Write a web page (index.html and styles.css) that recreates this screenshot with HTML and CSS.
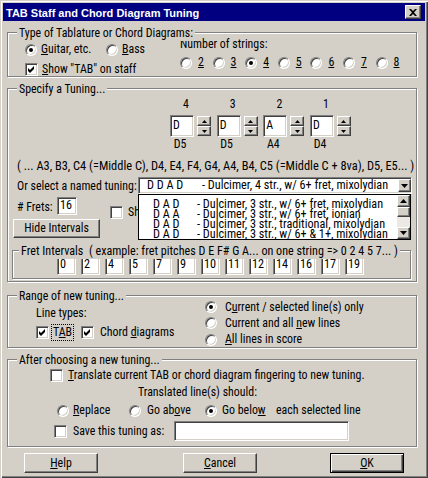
FILE: index.html
```html
<!DOCTYPE html>
<html>
<head>
<meta charset="utf-8">
<title>TAB Staff and Chord Diagram Tuning</title>
<link rel="stylesheet" href="styles.css">
</head>
<body>
<div class="window">
  <div class="titlebar">
    <span class="title">TAB Staff and Chord Diagram Tuning</span>
    <span class="closebtn"><svg width="8" height="7" viewBox="0 0 8 7"><path d="M0 0h2l2 2 2-2h2L5 3.5 8 7H6L4 5 2 7H0l3-3.5z"/></svg></span>
  </div>

  <div class="group g1">
    <span class="legend">Type of Tablature or Chord Diagrams:</span>
    <div class="g1-left">
      <div class="row r-guitar">
        <span class="opt opt-guitar"><span class="radio on"></span><span class="lbl"><u>G</u>uitar, etc.</span></span>
        <span class="opt"><span class="radio"></span><span class="lbl"><u>B</u>ass</span></span>
      </div>
      <div class="row r-show">
        <span class="check"><svg width="13" height="13" viewBox="0 0 13 13"><path d="M3 5v3l2 2 4-4V3L5 7z"/></svg></span><span class="lbl"><u>S</u>how "TAB" on staff</span>
      </div>
    </div>
    <div class="g1-right">
      <div class="nstr">Number of strings:</div>
      <div class="row strings">
        <span class="sopt"><span class="radio"></span><span class="lbl"><u>2</u></span></span>
        <span class="sopt"><span class="radio"></span><span class="lbl"><u>3</u></span></span>
        <span class="sopt"><span class="radio on"></span><span class="lbl"><u>4</u></span></span>
        <span class="sopt"><span class="radio"></span><span class="lbl"><u>5</u></span></span>
        <span class="sopt"><span class="radio"></span><span class="lbl"><u>6</u></span></span>
        <span class="sopt"><span class="radio"></span><span class="lbl"><u>7</u></span></span>
        <span class="sopt"><span class="radio"></span><span class="lbl"><u>8</u></span></span>
      </div>
    </div>
  </div>

  <div class="group g2">
    <span class="legend">Specify a Tuning...</span>
    <div class="cols nums">
      <span class="col"><span class="num">4</span></span>
      <span class="col"><span class="num">3</span></span>
      <span class="col"><span class="num">2</span></span>
      <span class="col"><span class="num">1</span></span>
    </div>
    <div class="cols spins">
      <span class="col"><span class="field note">D</span><span class="spin"><span class="btn sb"><svg width="5" height="3" viewBox="0 0 5 3"><path d="M0 3h5L2.5 0z"/></svg></span><span class="btn sb"><svg width="5" height="3" viewBox="0 0 5 3"><path d="M0 0h5L2.5 3z"/></svg></span></span></span>
      <span class="col"><span class="field note">D</span><span class="spin"><span class="btn sb"><svg width="5" height="3" viewBox="0 0 5 3"><path d="M0 3h5L2.5 0z"/></svg></span><span class="btn sb"><svg width="5" height="3" viewBox="0 0 5 3"><path d="M0 0h5L2.5 3z"/></svg></span></span></span>
      <span class="col"><span class="field note">A</span><span class="spin"><span class="btn sb"><svg width="5" height="3" viewBox="0 0 5 3"><path d="M0 3h5L2.5 0z"/></svg></span><span class="btn sb"><svg width="5" height="3" viewBox="0 0 5 3"><path d="M0 0h5L2.5 3z"/></svg></span></span></span>
      <span class="col"><span class="field note">D</span><span class="spin"><span class="btn sb"><svg width="5" height="3" viewBox="0 0 5 3"><path d="M0 3h5L2.5 0z"/></svg></span><span class="btn sb"><svg width="5" height="3" viewBox="0 0 5 3"><path d="M0 0h5L2.5 3z"/></svg></span></span></span>
    </div>
    <div class="cols pitches">
      <span class="col"><span class="pitch">D5</span></span>
      <span class="col"><span class="pitch">D5</span></span>
      <span class="col"><span class="pitch">A4</span></span>
      <span class="col"><span class="pitch">D4</span></span>
    </div>
    <div class="range">( ... A3, B3, C4 (=Middle C), D4, E4, F4, G4, A4, B4, C5 (=Middle C + 8va), D5, E5... )</div>
    <div class="named">
      <span class="named-label">Or select a named tuning:</span>
      <div class="combo">
        <div class="field combo-field">
          <span class="cp">D D A D</span><span class="cd">- Dulcimer, 4 str., w/ 6+ fret, mixolydian</span>
          <span class="btn ddbtn"><svg width="7" height="4" viewBox="0 0 7 4"><path d="M0 0h7L3.5 4z"/></svg></span>
        </div>
        <div class="droplist">
          <div class="items">
            <div class="item"><span class="ip">D A D</span><span>- Dulcimer, 3 str., w/ 6+ fret, mixolydian</span></div>
            <div class="item"><span class="ip">D A A</span><span>- Dulcimer, 3 str., w/ 6+ fret, ionian</span></div>
            <div class="item"><span class="ip">D A D</span><span>- Dulcimer, 3 str., traditional, mixolydian</span></div>
            <div class="item"><span class="ip">D A D</span><span>- Dulcimer, 3 str., w/ 6+ &amp; 1+, mixolydian</span></div>
          </div>
          <div class="sbar">
            <span class="btn sbtn"><svg width="7" height="4" viewBox="0 0 7 4"><path d="M0 4h7L3.5 0z"/></svg></span>
            <span class="btn thumb"></span>
            <span class="track"></span>
            <span class="btn sbtn"><svg width="7" height="4" viewBox="0 0 7 4"><path d="M0 0h7L3.5 4z"/></svg></span>
          </div>
        </div>
      </div>
    </div>
    <div class="frets">
      <span class="frets-label"># Frets:</span>
      <span class="field fbox">16</span>
      <span class="check sh"></span>
      <span class="sh-lbl">Show intervals</span>
    </div>
    <div class="btn hide-btn">Hide Intervals</div>
    <div class="group fretgroup">
      <span class="legend">Fret Intervals&nbsp; ( example: fret pitches D E F# G A... on one string =&gt; 0 2 4 5 7... )</span>
      <div class="boxes">
        <span class="field ibox">0</span>
        <span class="field ibox">2</span>
        <span class="field ibox">4</span>
        <span class="field ibox">5</span>
        <span class="field ibox">7</span>
        <span class="field ibox">9</span>
        <span class="field ibox">10</span>
        <span class="field ibox">11</span>
        <span class="field ibox">12</span>
        <span class="field ibox">14</span>
        <span class="field ibox">16</span>
        <span class="field ibox">17</span>
        <span class="field ibox">19</span>
      </div>
    </div>
  </div>

  <div class="group g3">
    <span class="legend">Range of new tuning...</span>
    <div class="g3-left">
      <div class="linetypes">Line types:</div>
      <div class="row ltrow">
        <span class="check"><svg width="13" height="13" viewBox="0 0 13 13"><path d="M3 5v3l2 2 4-4V3L5 7z"/></svg></span><span class="focus">T<u>A</u>B</span>
        <span class="check chord"><svg width="13" height="13" viewBox="0 0 13 13"><path d="M3 5v3l2 2 4-4V3L5 7z"/></svg></span><span class="lbl chord-lbl">Chord <u>d</u>iagrams</span>
      </div>
    </div>
    <div class="g3-right">
      <div class="row rrow first"><span class="radio on"></span><span class="lbl">C<u>u</u>rrent / selected line(s) only</span></div>
      <div class="row rrow"><span class="radio"></span><span class="lbl">Current and all <u>n</u>ew lines</span></div>
      <div class="row rrow"><span class="radio"></span><span class="lbl"><u>A</u>ll lines in score</span></div>
    </div>
  </div>

  <div class="group g4">
    <span class="legend">After choosing a new tuning...</span>
    <div class="row trow">
      <span class="check"></span><span class="lbl"><u>T</u>ranslate current TAB or chord diagram fingering to new tuning.</span>
    </div>
    <div class="tshould">Translated line(s) should:</div>
    <div class="row rrow4">
      <span class="opt o-replace"><span class="radio"></span><span class="lbl"><u>R</u>eplace</span></span>
      <span class="opt o-above"><span class="radio"></span><span class="lbl">Go ab<u>o</u>ve</span></span>
      <span class="opt o-below"><span class="radio on"></span><span class="lbl">Go belo<u>w</u></span></span>
      <span class="each">each selected line</span>
    </div>
    <div class="row saverow">
      <span class="check"></span><span class="lbl save-lbl">Save this tuning as:</span>
      <span class="field savefield"></span>
    </div>
  </div>

  <div class="buttons">
    <span class="btn pbtn help"><u>H</u>elp</span>
    <span class="btn pbtn cancel"><u>C</u>ancel</span>
    <span class="btn pbtn ok"><u>O</u>K</span>
  </div>
</div>
</body>
</html>
```

FILE: styles.css
```css
html, body {
  margin: 0;
  padding: 0;
  background: #d4d0c8;
}

.window {
  width: 428px;
  height: 478px;
  box-sizing: border-box;
  padding: 3px;
  background: #d4d0c8;
  box-shadow: inset 1px 1px 0 #d4d0c8, inset 2px 2px 0 #ffffff,
              inset -1px -1px 0 #404040, inset -2px -2px 0 #808080;
  font-family: "Roboto Condensed", "DejaVu Sans Condensed", sans-serif;
  font-size: 11.9px;
  color: #000;
  overflow: hidden;
}

u { text-decoration: underline; text-underline-offset: 1px; }

/* title bar */
.titlebar {
  height: 18px;
  background: #000080;
  display: flex;
  align-items: flex-start;
  justify-content: space-between;
  padding: 0 4px 0 3px;
}
.title {
  font-family: "Liberation Sans", Arial, sans-serif;
  font-weight: bold;
  font-size: 11px;
  line-height: 12px;
  color: #fff;
  margin-top: 4px;
  white-space: nowrap;
}
.closebtn {
  width: 16px;
  height: 14px;
  margin-top: 2px;
  box-sizing: border-box;
  background: #d4d0c8;
  border: 1px solid;
  border-color: #fff #404040 #404040 #fff;
  box-shadow: inset -1px -1px 0 #808080;
  display: flex;
  align-items: center;
  justify-content: center;
}

/* shared widgets */
.btn {
  box-sizing: border-box;
  background: #d4d0c8;
  border: 1px solid;
  border-color: #fff #404040 #404040 #fff;
  box-shadow: inset -1px -1px 0 #808080;
  display: flex;
  align-items: center;
  justify-content: center;
}
.field {
  box-sizing: border-box;
  background: #fff;
  border: 1px solid;
  border-color: #808080 #fff #fff #808080;
  box-shadow: inset 1px 1px 0 #404040, inset -1px -1px 0 #d4d0c8;
}
.radio {
  position: relative;
  flex: none;
  width: 12px;
  height: 12px;
  box-sizing: border-box;
  border-radius: 50%;
  background: #fff;
  border: 1px solid;
  border-color: #808080 #fff #fff #808080;
  box-shadow: inset 1px 1px 0 #404040, inset -1px -1px 0 #d4d0c8;
}
.radio.on::after {
  content: "";
  position: absolute;
  left: 3px;
  top: 3px;
  width: 4px;
  height: 4px;
  border-radius: 50%;
  background: #000;
}
.check {
  flex: none;
  width: 13px;
  height: 13px;
  box-sizing: border-box;
  background: #fff;
  border: 1px solid;
  border-color: #808080 #fff #fff #808080;
  box-shadow: inset 1px 1px 0 #404040, inset -1px -1px 0 #d4d0c8;
  display: flex;
}
.check svg {
  margin: -1px;
  flex: none;
}

.row {
  display: flex;
  align-items: center;
  height: 15px;
  line-height: 15px;
  white-space: nowrap;
}
.opt {
  display: flex;
  align-items: center;
  flex: none;
}
.radio + .lbl { margin-left: 4px; }
.check + .lbl { margin-left: 4px; }

/* group boxes */
.group {
  position: relative;
  box-sizing: border-box;
  border: 1px solid #808080;
  box-shadow: inset 1px 1px 0 #fff, 1px 1px 0 #fff;
  margin-left: 4px;
  width: 410px;
}
.legend {
  position: absolute;
  top: -7px;
  left: 9px;
  padding: 0 2px;
  background: #d4d0c8;
  line-height: 15px;
  white-space: nowrap;
}

/* group 1 */
.g1 {
  margin-top: 11px;
  height: 45px;
  display: flex;
}
.g1-left {
  margin-left: 17px;
  width: 155px;
  flex: none;
}
.r-guitar { margin-top: 9px; }
.opt-guitar { width: 81px; }
.r-show { margin-top: 5px; }
.nstr {
  margin-top: 4px;
  line-height: 15px;
}
.strings { margin-top: 3px; }
.sopt {
  display: flex;
  align-items: center;
  width: 32.6px;
  flex: none;
}
.sopt .radio + .lbl { margin-left: 6px; }

/* group 2 */
.g2 {
  margin-top: 11px;
  height: 194px;
}
.cols {
  display: flex;
  padding-left: 162px;
}
.col {
  width: 46.67px;
  flex: none;
}
.nums {
  margin-top: 8px;
  height: 15px;
  line-height: 15px;
}
.num {
  display: block;
  width: 32px;
  text-align: center;
}
.spins {
  margin-top: 3px;
  height: 22px;
}
.spins .col {
  display: flex;
  align-items: flex-start;
}
.note {
  width: 24px;
  height: 22px;
  line-height: 18px;
  padding-left: 2px;
}
.spin {
  margin-left: 3px;
  margin-top: 1px;
  width: 14px;
  display: flex;
  flex-direction: column;
}
.sb {
  height: 10px;
}
.pitches {
  height: 15px;
  line-height: 15px;
}
.pitch {
  display: block;
  width: 20px;
  text-align: center;
}
.range {
  margin-top: 6px;
  padding-left: 9px;
  font-size: 12.4px;
  line-height: 15px;
  white-space: nowrap;
}
.named {
  margin-top: 4px;
  display: flex;
  height: 17px;
}
.named-label {
  flex: none;
  width: 121px;
  padding-left: 9px;
  margin-top: 2px;
  line-height: 15px;
  white-space: nowrap;
}
.combo {
  position: relative;
  width: 274px;
  height: 17px;
  flex: none;
}
.combo-field {
  height: 17px;
  display: flex;
  align-items: center;
  font-size: 12.2px;
  line-height: 13px;
  padding-left: 8px;
  white-space: nowrap;
}
.cp {
  width: 55px;
  flex: none;
}
.ddbtn {
  margin-left: auto;
  width: 13px;
  height: 13px;
  flex: none;
}
.droplist {
  position: absolute;
  top: 17px;
  left: 0;
  width: 273px;
  height: 46px;
  box-sizing: border-box;
  border: 1px solid #000;
  background: #fff;
  display: flex;
  z-index: 2;
  font-size: 12.2px;
}
.items {
  flex: 1;
  padding-top: 3.6px;
  padding-left: 14px;
  line-height: 10.3px;
  overflow: hidden;
  white-space: nowrap;
}
.item {
  display: flex;
  height: 10.3px;
}
.ip {
  width: 44px;
  flex: none;
}
.sbar {
  width: 13px;
  flex: none;
  display: flex;
  flex-direction: column;
  background: #ece9e4;
}
.sbtn {
  height: 12px;
  flex: none;
}
.thumb {
  height: 10px;
  flex: none;
}
.track {
  flex: 1;
}
.frets {
  margin-top: 3px;
  height: 18px;
  display: flex;
  align-items: flex-start;
  white-space: nowrap;
}
.frets-label {
  width: 40px;
  padding-left: 9px;
  margin-top: 3px;
  line-height: 15px;
  flex: none;
}
.fbox {
  width: 20px;
  height: 18px;
  line-height: 14px;
  padding-left: 2px;
  font-size: 12.2px;
  flex: none;
}
.sh {
  margin-left: 33px;
  margin-top: 9px;
}
.sh-lbl {
  margin-left: 5px;
  margin-top: 8px;
  width: 10px;
  overflow: hidden;
  line-height: 15px;
  flex: none;
}
.hide-btn {
  margin-top: 4px;
  margin-left: 5px;
  width: 87px;
  height: 19px;
  line-height: 17px;
}
.fretgroup {
  margin-top: 12px;
  margin-left: 4px;
  width: 399px;
  height: 29px;
}
.fretgroup .legend {
  left: 6px;
  font-size: 12.1px;
}
.boxes {
  display: flex;
  gap: 5px;
  margin-top: 5px;
  margin-left: 44px;
}
.ibox {
  width: 19px;
  height: 19px;
  line-height: 15px;
  padding-left: 2px;
  font-size: 12.2px;
  flex: none;
}

/* group 3 */
.g3 {
  margin-top: 13px;
  height: 53px;
  display: flex;
}
.g3-left {
  width: 197px;
  flex: none;
}
.linetypes {
  margin-top: 10px;
  padding-left: 28px;
  line-height: 15px;
}
.ltrow {
  margin-top: 4px;
  padding-left: 28px;
}
.focus {
  margin-left: 2px;
  padding: 0 1px;
  border: 1px dotted #000;
  line-height: 15px;
}
.chord { margin-left: 7px; }
.chord + .lbl { margin-left: 6px; }
.rrow { height: 16.25px; }
.rrow.first { margin-top: 3px; }
.g3-right .radio + .lbl { margin-left: 8px; }

/* group 4 */
.g4 {
  margin-top: 11px;
  height: 88px;
}
.trow {
  margin-top: 8px;
  padding-left: 42px;
}
.trow .check + .lbl { margin-left: 5px; }
.tshould {
  margin-top: 2px;
  padding-left: 130px;
  line-height: 15px;
}
.rrow4 {
  margin-top: 3px;
  padding-left: 49px;
}
.o-replace { width: 72px; }
.o-above { width: 76px; }
.o-below { width: 71px; }
.o-above .radio + .lbl { margin-left: 6px; }
.o-below .radio + .lbl { margin-left: 5px; }
.saverow {
  margin-top: 3px;
  height: 20px;
  padding-left: 46px;
}
.saverow .check + .lbl { margin-left: 6px; }
.save-lbl {
  width: 101px;
  flex: none;
}
.savefield {
  width: 175px;
  height: 20px;
  flex: none;
}

/* bottom buttons */
.buttons {
  display: flex;
  margin-top: 6px;
}
.pbtn {
  width: 74px;
  height: 20px;
  line-height: 18px;
  flex: none;
}
.help { margin-left: 21px; }
.cancel { margin-left: 85px; }
.ok {
  margin-left: 73px;
  border: 1px solid #000;
  box-shadow: inset 1px 1px 0 #fff, inset -1px -1px 0 #404040, inset -2px -2px 0 #808080;
}
```
